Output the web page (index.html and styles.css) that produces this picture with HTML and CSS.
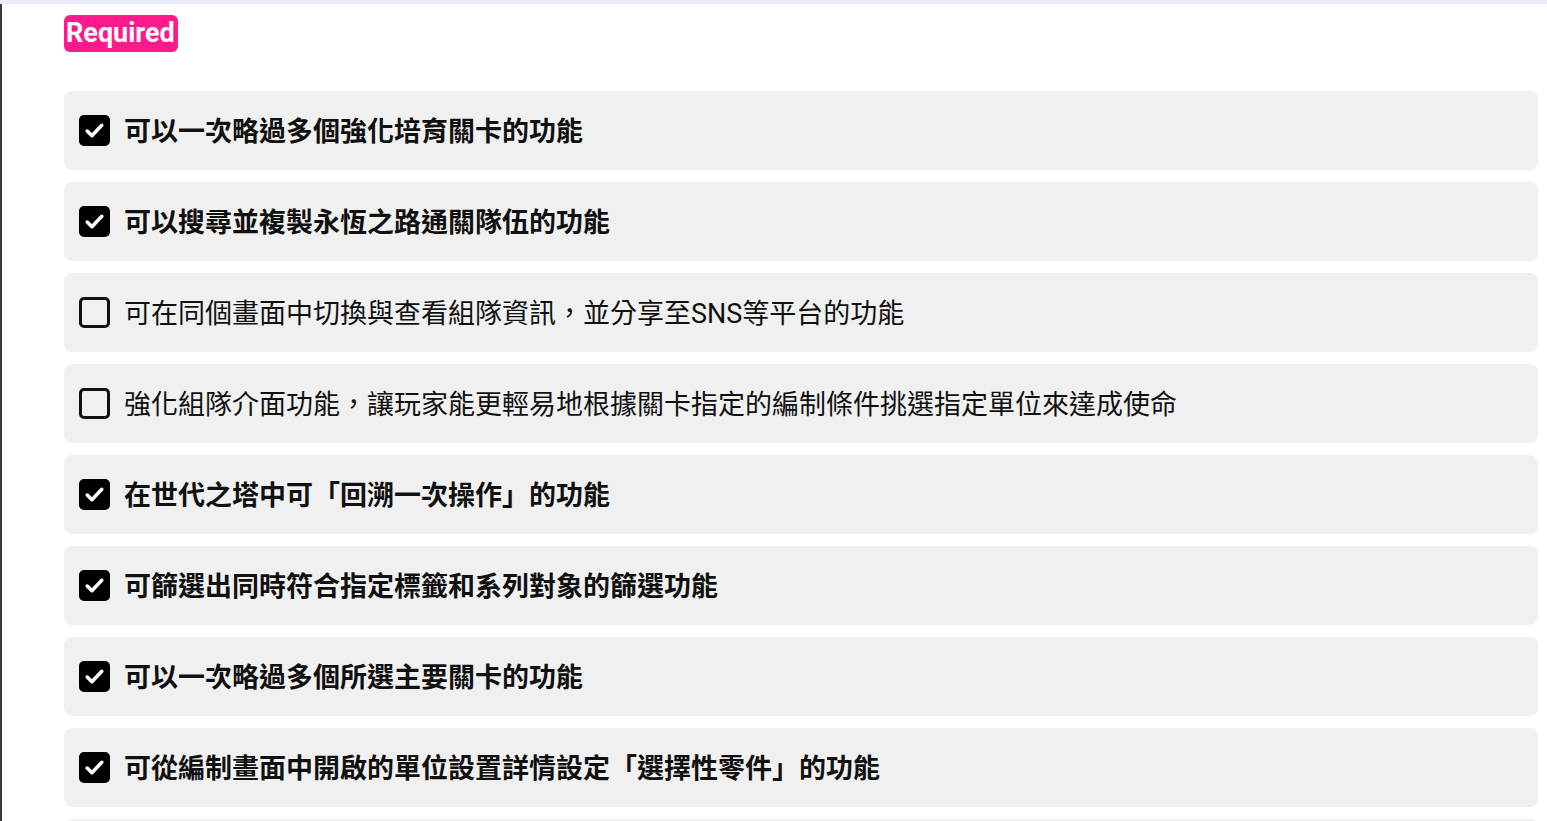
FILE: index.html
```html
<!DOCTYPE html>
<html lang="zh-Hant">

<head>
    <meta charset="UTF-8" />
    <meta name="viewport" content="width=device-width, initial-scale=1.0" />
    <title>Required features</title>
    <link rel="stylesheet" href="styles.css">
</head>

<body>
    <div class="topbar"></div>
    <main class="panel">
        <span class="badge">Required</span>

        <ul class="features">
            <li class="feature checked">
                <span class="box"><svg viewBox="0 0 24 24"><path d="M5 12.5l4.5 4.5 9.5-10"/></svg></span>
                <span class="label">可以一次略過多個強化培育關卡的功能</span>
            </li>
            <li class="feature checked">
                <span class="box"><svg viewBox="0 0 24 24"><path d="M5 12.5l4.5 4.5 9.5-10"/></svg></span>
                <span class="label">可以搜尋並複製永恆之路通關隊伍的功能</span>
            </li>
            <li class="feature">
                <span class="box"></span>
                <span class="label">可在同個畫面中切換與查看組隊資訊，並分享至SNS等平台的功能</span>
            </li>
            <li class="feature">
                <span class="box"></span>
                <span class="label">強化組隊介面功能，讓玩家能更輕易地根據關卡指定的編制條件挑選指定單位來達成使命</span>
            </li>
            <li class="feature checked">
                <span class="box"><svg viewBox="0 0 24 24"><path d="M5 12.5l4.5 4.5 9.5-10"/></svg></span>
                <span class="label">在世代之塔中可「回溯一次操作」的功能</span>
            </li>
            <li class="feature checked">
                <span class="box"><svg viewBox="0 0 24 24"><path d="M5 12.5l4.5 4.5 9.5-10"/></svg></span>
                <span class="label">可篩選出同時符合指定標籤和系列對象的篩選功能</span>
            </li>
            <li class="feature checked">
                <span class="box"><svg viewBox="0 0 24 24"><path d="M5 12.5l4.5 4.5 9.5-10"/></svg></span>
                <span class="label">可以一次略過多個所選主要關卡的功能</span>
            </li>
            <li class="feature checked">
                <span class="box"><svg viewBox="0 0 24 24"><path d="M5 12.5l4.5 4.5 9.5-10"/></svg></span>
                <span class="label">可從編制畫面中開啟的單位設置詳情設定「選擇性零件」的功能</span>
            </li>
            <li class="feature"></li>
        </ul>
    </main>
</body>

</html>
```

FILE: styles.css
```css
:root{
    --pink: #ff1a8c;
    --row: #f0f0f0;
    --ink: #111;
    --line: #3a3a3a;
    --top: #e8edf6;
}

body{
    margin: 0;
    font-family: Roboto, "Noto Sans CJK TC", sans-serif;
    color: var(--ink);
    background: #fff;
}
.topbar{
    height: 4px;
    background-color: var(--top);
}
.panel{
    border-left: 2px solid var(--line);
    padding: 11px 9px 0 62px;
    min-height: 900px;
}
.badge{
    display: inline-block;
    background-color: var(--pink);
    color: #fff;
    font-weight: bold;
    font-size: 27px;
    line-height: 37px;
    padding: 0 3px 0 2px;
    border-radius: 6px;
}
.features{
    list-style: none;
    margin: 39px 0 0;
    padding: 0;
    display: flex;
    flex-direction: column;
    gap: 12px;
}
.feature{
    display: flex;
    align-items: center;
    gap: 14px;
    height: 79px;
    padding: 0 15px;
    background-color: var(--row);
    border-radius: 8px;
    font-size: 27px;
}
.box{
    flex: none;
    width: 31px;
    height: 31px;
    box-sizing: border-box;
    border: 3px solid var(--ink);
    border-radius: 5px;
    display: flex;
    align-items: center;
    justify-content: center;
}
.box svg{
    width: 27px;
    height: 27px;
    fill: none;
    stroke: #fff;
    stroke-width: 3.4;
    stroke-linecap: round;
    stroke-linejoin: round;
}
.checked .box{
    background-color: #000;
    border-color: #000;
}
.checked .label{
    font-weight: bold;
}
.label{
    line-height: 1;
    padding-top: 4px;
    white-space: nowrap;
}
```
